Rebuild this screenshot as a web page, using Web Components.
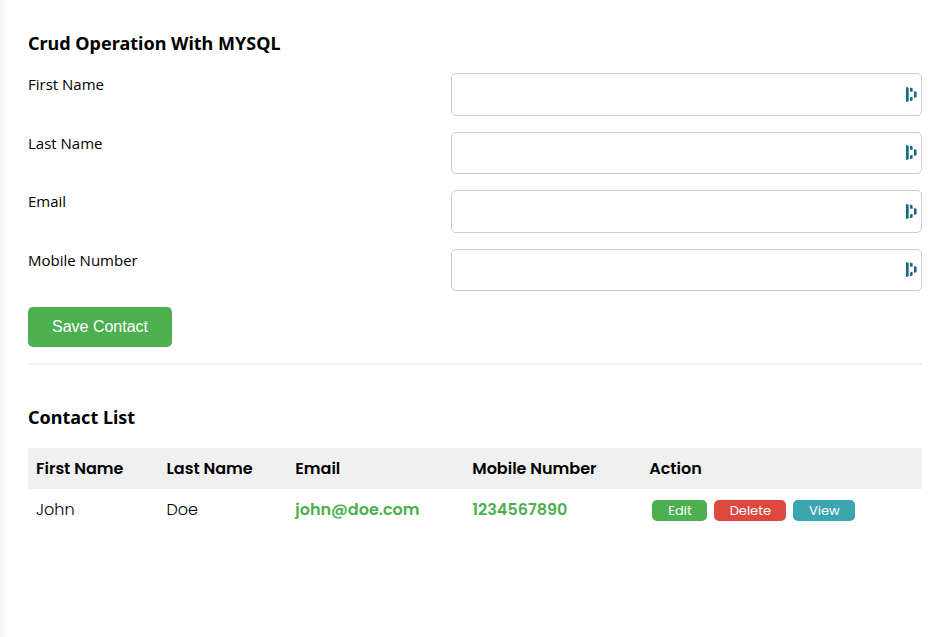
<!DOCTYPE html>
<html lang="en">
<head>
<meta charset="utf-8">
<meta name="viewport" content="width=device-width, initial-scale=1">
<title>Crud Operation With MYSQL</title>
<style>
  html, body { margin: 0; min-height: 100%; background: #fff; }
  body { color: #000; font: 16px/24px "Open Sans", "Noto Sans", sans-serif; }
</style>
</head>
<body>
<contact-page>
  <contact-form></contact-form>
  <contact-table></contact-table>
</contact-page>

<script>
const define = (name, html, setup) => {
  const template = document.createElement('template');
  template.innerHTML = html;
  customElements.define(name, class extends HTMLElement {
    constructor() {
      super();
      this.attachShadow({ mode: 'open' }).append(template.content.cloneNode(true));
    }
    connectedCallback() { if (setup) setup(this, this.shadowRoot); }
  });
};

define('contact-page', `
  <style>
    :host { display: block; box-sizing: border-box; min-height: 100vh; padding: 31px 24px 32px 28px;
      background: linear-gradient(to right, #f2f2f2, #fff 8px); }
    main { display: flex; flex-direction: column; }
  </style>
  <main><slot></slot></main>`);

define('section-title', `
  <style>
    :host { display: block; }
    h2 { margin: 0; font: 700 18px/24px "Noto Sans", "Open Sans", sans-serif; }
  </style>
  <h2><slot></slot></h2>`);

define('form-field', `
  <style>
    :host { display: grid; grid-template-columns: 9fr 10fr; }
    label { font-size: 15px; line-height: 22px; }
    .box { display: flex; align-items: center; box-sizing: border-box; height: var(--field-height, 43px);
      padding-right: 4px; border: 1px solid #ccc; border-radius: 5px; background: #fff; }
    input { flex: 1; min-width: 0; align-self: stretch; padding: 0 8px; border: 0; outline: 0;
      background: transparent; font: inherit; }
    .box:focus-within { border-color: #4caf50; }
    svg { flex: none; width: 12px; height: 18px; fill: #176b7c; }
  </style>
  <label for="field"></label>
  <div class="box">
    <input id="field">
    <svg viewBox="0 0 12 18" aria-hidden="true">
      <path d="M1 1 3.700 1.700V15.300L1 16ZM5 1.500l2.600.8V6L5 5.400ZM9 5l2.600.9v5.200L9 12ZM5 11.400 7.600 10.700v3.800L5 15.300Z"/>
    </svg>
  </div>`, (host, root) => {
    root.querySelector('label').textContent = host.getAttribute('label');
    root.querySelector('input').type = host.getAttribute('type') || 'text';
  });

define('save-button', `
  <style>
    :host { display: block; }
    button { height: 40px; padding: 0 24px; border: 0; border-radius: 5px; background: #4caf50; color: #fff;
      font: 16px/24px "Liberation Sans", Arial, sans-serif; cursor: pointer; }
  </style>
  <button type="button"><slot></slot></button>`);

define('contact-form', `
  <style>
    :host { display: block; padding-bottom: 16px; border-bottom: 2px solid #f0f0f0; }
    form { display: flex; flex-direction: column; gap: 16px; margin-top: 18px; }
    form-field:nth-of-type(even) { --field-height: 42px; }
  </style>
  <section-title>Crud Operation With MYSQL</section-title>
  <form>
    <form-field label="First Name"></form-field>
    <form-field label="Last Name"></form-field>
    <form-field label="Email" type="email"></form-field>
    <form-field label="Mobile Number" type="tel"></form-field>
    <save-button>Save Contact</save-button>
  </form>`);

define('row-action', `
  <style>
    :host { display: inline-flex; --fill: #4caf50; }
    :host([kind="delete"]) { --fill: #df483f; }
    :host([kind="view"]) { --fill: #3aa6af; }
    button { height: 21px; padding: 0 15px 0 16px; border: 0; border-radius: 5px; background: var(--fill); color: #fff;
      font: 13px/20px Poppins, Inter, sans-serif; cursor: pointer; }
  </style>
  <button type="button"><slot></slot></button>`);

define('contact-table', `
  <style>
    :host { display: block; margin-top: 40px; }
    table { width: 100%; margin-top: 19px; border-collapse: collapse; table-layout: fixed;
      font: 16px/25px Poppins, Inter, sans-serif; }
    th, td { padding: 8px; text-align: left; white-space: nowrap; }
    thead { background: #f0f0f0; }
    th { font-weight: 600; }
    td { font-weight: 300; }
    .short { width: 14.6%; }
    .mid { width: 14.4%; }
    .long { width: 19.8%; }
    .strong { color: #4caf50; font-weight: 600; }
    .actions { display: flex; gap: 7px; padding: 2px 2px 0 3px; }
  </style>
  <section-title>Contact List</section-title>
  <table>
    <colgroup><col class="short"><col class="mid"><col class="long"><col class="long"><col></colgroup>
    <thead><tr><th>First Name</th><th>Last Name</th><th>Email</th><th>Mobile Number</th><th>Action</th></tr></thead>
    <tbody><tr>
      <td>John</td><td>Doe</td><td class="strong">john@doe.com</td><td class="strong">1234567890</td>
      <td><div class="actions">
        <row-action kind="edit">Edit</row-action>
        <row-action kind="delete">Delete</row-action>
        <row-action kind="view">View</row-action>
      </div></td>
    </tr></tbody>
  </table>`);
</script>
</body>
</html>
